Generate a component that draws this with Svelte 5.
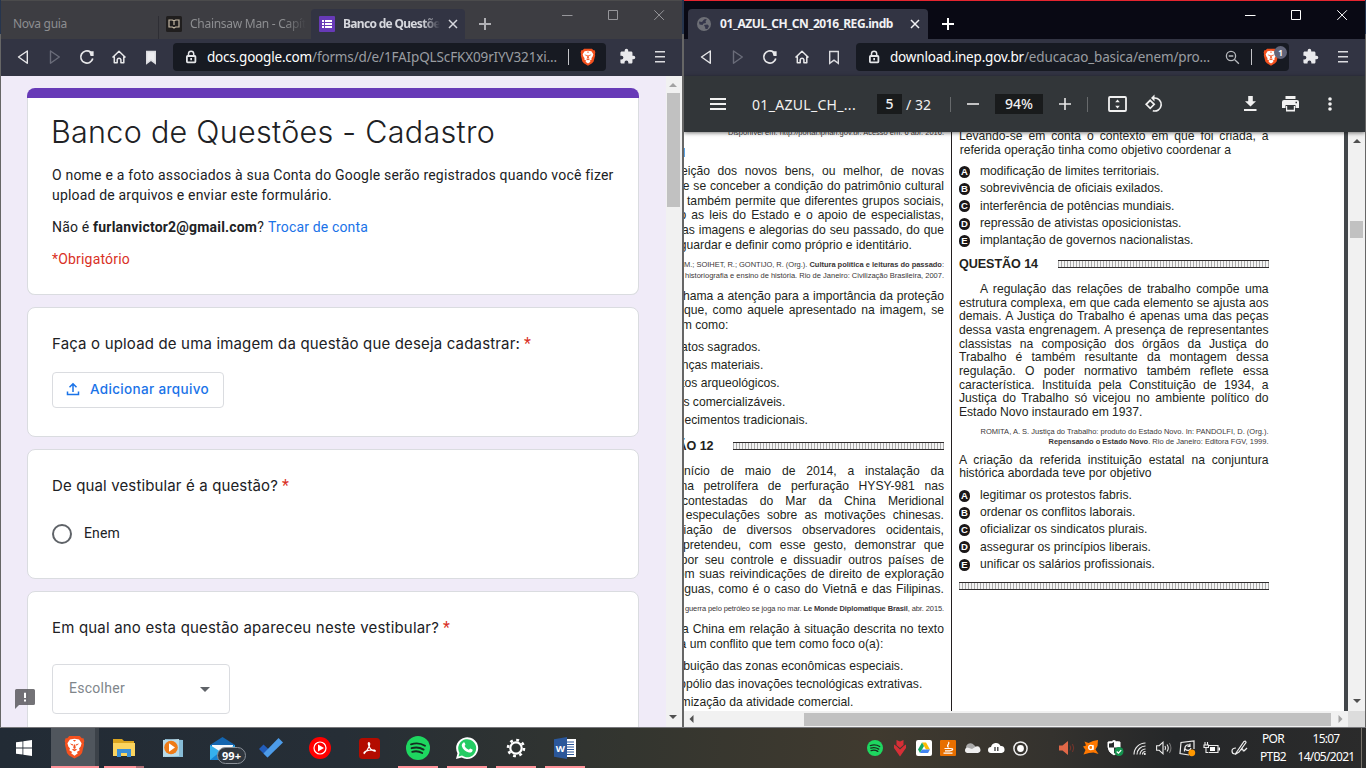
<script>
  // Spreads the letters of a single-line label over a given width.
  function fit(node, width) {
    const natural = node.getBoundingClientRect().width;
    const count = node.textContent.length;
    node.style.letterSpacing = (width - natural) / count + 'px';
  }

  // j: start offset of a justified line, e: right end of a ragged line
  const leftColumn = [
    { gap: -5, lh: 11, cls: 'src', lines: [{ e: 260, w: 216, t: 'Disponível em: http://portal.iphan.gov.br. Acesso em: 6 abr. 2016.' }] },
    { gap: 26.2, lh: 14.7, lines: [
      { j: -3, t: 'eição dos novos bens, ou melhor, de novas' },
      { j: -1.3, t: 'e se conceber a condição do patrimônio cultural' },
      { j: 3, t: 'também permite que diferentes grupos sociais,' },
      { j: -4.5, t: 'o as leis do Estado e o apoio de especialistas,' },
      { j: -2, t: 'as imagens e alegorias do seu passado, do que' },
      { e: 228, t: 'guardar e definir como próprio e identitário.' } ] },
    { gap: 6.9, lh: 11, cls: 'src', lines: [
      { e: 260, w: 260, t: 'M.; SOIHET, R.; GONTIJO, R. (Org.). ', b: 'Cultura política e leituras do passado', z: ':' },
      { e: 260, w: 259, t: 'historiografia e ensino de história. Rio de Janeiro: Civilização Brasileira, 2007.' } ] },
    { gap: 7.4, lh: 14.5, lines: [
      { j: -1, t: 'hama a atenção para a importância da proteção' },
      { j: 0, t: 'que, como aquele apresentado na imagem, se' },
      { e: 44.3, t: 'm como:' } ] },
    { gap: 5.8, lh: 18.3, lines: [
      { e: 76.7, t: 'atos sagrados.' }, { e: 79.3, t: 'nças materiais.' }, { e: 95.7, t: 'tos arqueológicos.' },
      { e: 101.3, t: 's comercializáveis.' }, { e: 124, t: 'ecimentos tradicionais.' } ] },
    { gap: 8.5, lh: 16, head: 'ÃO 12', end: 29.5, rule: 211 },
    { gap: 10.3, lh: 14.75, lines: [
      { j: 0, t: 'nício de maio de 2014, a instalação da' },
      { j: -3.5, t: 'na petrolífera de perfuração HYSY-981 nas' },
      { j: -2, t: 'contestadas do Mar da China Meridional' },
      { j: 1.7, t: 'especulações sobre as motivações chinesas.' },
      { j: -0.5, t: 'iação de diversos observadores ocidentais,' },
      { j: -1, t: 'pretendeu, com esse gesto, demonstrar que' },
      { j: -3.3, t: 'por seu controle e dissuadir outros países de' },
      { j: -6.2, t: 'om suas reivindicações de direito de exploração' },
      { j: 0.3, t: 'guas, como é o caso do Vietnã e das Filipinas.' } ] },
    { gap: 6.1, lh: 11, cls: 'src', lines: [{ e: 260, w: 259, t: 'guerra pelo petróleo se joga no mar. ', b: 'Le Monde Diplomatique Brasil', z: ', abr. 2015.' }] },
    { gap: 7.8, lh: 15, lines: [
      { j: -2, t: 'a China em relação à situação descrita no texto' },
      { e: 199.3, t: 'a um conflito que tem como foco o(a):' } ] },
    { gap: 5, lh: 18, lines: [
      { e: 219.3, t: 'ibuição das zonas econômicas especiais.' },
      { e: 238.3, t: 'opólio das inovações tecnológicas extrativas.' },
      { e: 169.3, t: 'mização da atividade comercial.' } ] }
  ];

  const rightColumn = [
    { gap: -1.6, lh: 13.7, lines: [
      { j: 0, t: 'Levando-se em conta o contexto em que foi criada, a' },
      { e: 272, t: 'referida operação tinha como objetivo coordenar a' } ] },
    { gap: 5.3, lh: 17.3, options: [
      ['modificação de limites territoriais.', 179.5], ['sobrevivência de oficiais exilados.', 183.5],
      ['interferência de potências mundiais.', 194.5], ['repressão de ativistas oposicionistas.', 201.5],
      ['implantação de governos nacionalistas.', 213.5] ] },
    { gap: 6.4, lh: 16, head: 'QUESTÃO 14', end: 79, rule: 211 },
    { gap: 10.9, lh: 13.7, lines: [
      { j: 21, t: 'A regulação das relações de trabalho compõe uma' },
      { j: 0, t: 'estrutura complexa, em que cada elemento se ajusta aos' },
      { j: 0, t: 'demais. A Justiça do Trabalho é apenas uma das peças' },
      { j: 0, t: 'dessa vasta engrenagem. A presença de representantes' },
      { j: 0, t: 'classistas na composição dos órgãos da Justiça do' },
      { j: 0, t: 'Trabalho é também resultante da montagem dessa' },
      { j: 0, t: 'regulação. O poder normativo também reflete essa' },
      { j: 0, t: 'característica. Instituída pela Constituição de 1934, a' },
      { j: 0, t: 'Justiça do Trabalho só vicejou no ambiente político do' },
      { e: 183.5, t: 'Estado Novo instaurado em 1937.' } ] },
    { gap: 7.3, lh: 10, cls: 'src', lines: [
      { e: 309.5, w: 288, t: 'ROMITA, A. S. Justiça do Trabalho: produto do Estado Novo. In: PANDOLFI, D. (Org.).' },
      { e: 309.5, w: 220, t: '', b: 'Repensando o Estado Novo', z: '. Rio de Janeiro: Editora FGV, 1999.' } ] },
    { gap: 6.6, lh: 13.8, lines: [
      { j: 0, t: 'A criação da referida instituição estatal na conjuntura' },
      { e: 192.5, t: 'histórica abordada teve por objetivo' } ] },
    { gap: 5.7, lh: 17.3, options: [
      ['legitimar os protestos fabris.', 152], ['ordenar os conflitos laborais.', 155.5],
      ['oficializar os sindicatos plurais.', 167.5], ['assegurar os princípios liberais.', 171],
      ['unificar os salários profissionais.', 175] ] }
  ];
</script>

{#snippet lion()}
  <path fill="#f4511e" d="M5 1h10l2 2 1.6 0 .8 3-.6 1.6.4 1.6-2 8-2 2.4L10 22.6 4.8 19.600l-2-2.4-2-8L1.200 7.600.6 6l.8-3L3 3z"/>
  <path fill="#fff" d="M5.600 4.200 10 3.600l4.400.6 2.400 3.800-.9 3-1.600 2 .7 1.500-2.800 1.700 1 1.300L10 19.800 6.800 17.500l1-1.300L5 14.500 5.700 13l-1.600-2-.9-3z"/>
  <path fill="#f4511e" d="M5.500 8.200l3.100.7-.5 1.500zM14.500 8.200l-3.100.7.5 1.500zM9.300 9h1.400l.5 3.500-1.200.9-1.200-.9zM7.300 14l2.100-.6.6.5.6-.5 2.100.6-2.700 1.600zM8.500 4.700h3L10 6.500z"/>
{/snippet}

{#snippet closeX(size)}
  <svg width={size} height={size} viewBox="0 0 10 10" fill="none" stroke="currentColor" stroke-width="1.5"><path d="M1 1l8 8M9 1l-8 8"/></svg>
{/snippet}

{#snippet plus()}
  <svg width="12" height="12" viewBox="0 0 12 12" fill="none" stroke="currentColor" stroke-width="2"><path d="M6 0v12M0 6h12"/></svg>
{/snippet}

{#snippet controls()}
  <div class="controls">
    <svg width="11" height="11" viewBox="0 0 11 11" fill="none" stroke="currentColor"><path d="M0 5.500h10.500"/></svg>
    <svg width="11" height="11" viewBox="0 0 11 11" fill="none" stroke="currentColor"><path d="M.5.5h9v9h-9z"/></svg>
    <svg width="11" height="11" viewBox="0 0 11 11" fill="none" stroke="currentColor"><path d="M.3.300l9.600 9.600M9.900.300L.3 9.900"/></svg>
  </div>
{/snippet}

{#snippet navbar(host, hostW, path, pathW, marked, pdf)}
  <div class="nav">
    <div class="navicons">
      <svg width="24" height="24" viewBox="0 0 24 24" fill="none" stroke="#e8e8ea" stroke-width="1.400" stroke-linejoin="round"><path d="M16.300 6v12.200L7.500 12z"/></svg>
      <svg width="24" height="24" viewBox="0 0 24 24" fill="none" stroke="#6a6c79" stroke-width="1.400" stroke-linejoin="round"><path d="M7.500 6v12.200L16.300 12z"/></svg>
      <svg width="24" height="24" viewBox="0 0 24 24" fill="none" stroke="#e8e8ea" stroke-width="1.700"><path d="M17.800 13.500A6.100 6.100 0 1 1 15.500 7"/><path fill="#e8e8ea" stroke="none" d="M14 6.300h4.600v4.800h-3z"/></svg>
      <svg width="24" height="24" viewBox="0 0 24 24" fill="none" stroke="#e8e8ea" stroke-width="1.500" stroke-linejoin="round"><path d="M5.500 12.500L12 6.300l6.500 6.200M7.300 11.500v6.300h2.900v-3.200a1.900 1.900 0 0 1 3.700 0v3.200h2.900v-6.300"/></svg>
      <svg width="24" height="24" viewBox="0 0 24 24" fill={marked ? '#ededf0' : 'none'} stroke="#dcdce0" stroke-width="1.400"><path d="M7.700 6.500h8.600v11.800L12 15.200l-4.300 3.100z"/></svg>
    </div>
    <div class="url">
      <svg class="lock" width="12" height="14" viewBox="0 0 12 14"><rect x="1.900" y="6" width="8.500" height="6.300" rx=".7" fill="none" stroke="#e4e5e8" stroke-width="1.800"/><path d="M3.500 6V3.800a2.600 2.600 0 0 1 5.200 0V6" fill="none" stroke="#e4e5e8" stroke-width="1.500"/><path fill="#e4e5e8" d="M5.300 8h1.700v2.200H5.300z"/></svg>
      <span class="host" use:fit={hostW}>{host}</span><span class="path" use:fit={pathW}>{path}</span>
      <span class="grow"></span>
      {#if pdf}
        <svg class="loupe" width="15" height="15" viewBox="0 0 15 15" fill="none" stroke="#b7b9bd" stroke-width="1.300"><circle cx="6" cy="6" r="4.600"/><path d="M9.500 9.500l4.400 4.200M3.700 6h4.600"/></svg>
      {/if}
      <i class="bar"></i>
      <span class="shield"><svg width="16" height="18" viewBox="0 0 20 23">{@render lion()}</svg>{#if pdf}<b class="count">1</b>{/if}</span>
    </div>
    <svg class="puzzle" width="17" height="17" viewBox="0 0 24 24" fill="#e9e9ec"><path d="M20.500 11H19V7c0-1.100-.9-2-2-2h-4V3.500a2.500 2.500 0 0 0-5 0V5H4c-1.100 0-2 .9-2 2v3.800h1.500a2.700 2.700 0 0 1 0 5.400H2V20c0 1.100.9 2 2 2h3.800v-1.500a2.700 2.700 0 0 1 5.400 0V22H17c1.100 0 2-.9 2-2v-4h1.500a2.500 2.500 0 0 0 0-5z"/></svg>
    <svg class="burger" width="10" height="12" viewBox="0 0 10 12" fill="#dcdce0"><path d="M0 0h10v1.600H0zM0 5h10v1.600H0zM0 10h10v1.600H0z"/></svg>
  </div>
{/snippet}

{#snippet column(blocks)}
  {#each blocks as b}
    <div class="block {b.cls ?? ''}" style="margin-top:{b.gap}px; line-height:{b.lh}px">
      {#if b.head}
        <div class="head"><div class="ragged" style="width:{b.end}px"><strong use:fit={b.end > 50 ? 79 : 36}>{b.head}</strong></div><i class="rule" style="width:{b.rule}px"></i></div>
      {:else if b.options}
        {#each b.options as [t, w], i}
          <div class="opt" style="height:{b.lh}px"><span class="bullet">{'ABCDE'[i]}</span><span use:fit={w}>{t}</span></div>
        {/each}
      {:else}
        {#each b.lines as l}
          {#if l.e !== undefined}
            <div class="ragged" style="width:{l.e}px; height:{b.lh}px">
              {#if l.w}<span use:fit={l.w}>{l.t}{#if l.b}<b>{l.b}</b>{/if}{l.z ?? ''}</span>{:else}<span>{l.t}</span>{/if}
            </div>
          {:else}
            <div class="just" style="margin-left:{l.j}px; height:{b.lh}px">{l.t}</div>
          {/if}
        {/each}
      {/if}
    </div>
  {/each}
{/snippet}

<div class="screen">
  <main>
    <section class="win left">
      <div class="tabs dim">
        <div class="tab first"><span use:fit={54}>Nova guia</span></div>
        <div class="tab second">
          <svg width="16" height="16" viewBox="0 0 16 16"><rect width="16" height="16" rx="1.500" fill="#201e1e"/><path d="M3 4h3.500L8 5l1.500-1H13v7H9.500L8 12l-1.500-1H3zM8 5v4" fill="none" stroke="#c5b8a4" stroke-width="1.200"/></svg>
          <span class="fade" use:fit={116}>Chainsaw Man - Capít</span>
        </div>
        <div class="tab active">
          <svg width="16" height="16" viewBox="0 0 16 16"><rect width="16" height="16" rx="1" fill="#673ab7"/><path fill="#fff" d="M3 4h2v2H3zM3 7h2v2H3zM3 10h2v2H3zM6 4h7v2H6zM6 7h7v2H6zM6 10h7v2H6z"/></svg>
          <strong class="fade" use:fit={97}>Banco de Questõe</strong>
          <em>{@render closeX(10)}</em>
        </div>
        <span class="new">{@render plus()}</span>
        {@render controls()}
      </div>
      {@render navbar('docs.google.com', 105, '/forms/d/e/1FAIpQLScFKX09rIYV321xi...', 245, true, false)}
      <div class="formview">
        <div class="form">
          <article class="intro">
            <h1><span use:fit={444}>Banco de Questões - Cadastro</span></h1>
            <p><span use:fit={561}>O nome e a foto associados à sua Conta do Google serão registrados quando você fizer</span><br><span use:fit={280}>upload de arquivos e enviar este formulário.</span></p>
            <p class="acct"><span use:fit={212}>Não é <b>furlanvictor2@gmail.com</b>?</span><a use:fit={100}>Trocar de conta</a></p>
            <p class="req"><span use:fit={78}>*Obrigatório</span></p>
          </article>
          <article class="q1">
            <h2><span use:fit={468}>Faça o upload de uma imagem da questão que deseja cadastrar:</span><sup>*</sup></h2>
            <button><svg width="14" height="14" viewBox="0 0 14 14" fill="none" stroke="#1a73e8" stroke-width="1.500"><path d="M7 10V2M3.500 5.200L7 1.700l3.500 3.500M1.500 9.500v3h11v-3"/></svg><span use:fit={119}>Adicionar arquivo</span></button>
          </article>
          <article class="q2">
            <h2><span use:fit={226}>De qual vestibular é a questão?</span><sup>*</sup></h2>
            <div class="radio"><i></i><span use:fit={36}>Enem</span></div>
          </article>
          <article class="q3">
            <h2><span use:fit={387}>Em qual ano esta questão apareceu neste vestibular?</span><sup>*</sup></h2>
            <div class="select"><span use:fit={56}>Escolher</span><svg width="10" height="5" viewBox="0 0 10 5"><path fill="#5f6368" d="M0 0h10L5 5z"/></svg></div>
          </article>
          <svg class="report" width="20" height="20" viewBox="0 0 20 20"><path fill="#5c5b5f" fill-opacity=".86" d="M1.500 0h17Q20 0 20 1.500v13Q20 16 18.500 16H4l-4 4V1.500Q0 0 1.500 0z"/><path fill="#fff" d="M9 3.800h2v5.200H9zM9 10.600h2v2H9z"/></svg>
        </div>
        <div class="vbar">
          <svg width="8" height="4" viewBox="0 0 8 4"><path fill="#a3a3a3" d="M0 4h8L4 0z"/></svg>
          <i></i>
          <svg class="dn" width="8" height="4" viewBox="0 0 8 4"><path fill="#505050" d="M0 0h8L4 4z"/></svg>
        </div>
      </div>
    </section>

    <section class="win right">
      <div class="tabs dark">
        <div class="tab active">
          <svg width="14" height="14" viewBox="0 0 14 14"><circle cx="7" cy="7" r="7" fill="#6d6f76"/><path fill="#34364a" d="M2 4.500l3 .5 1.500-2L8 2l2 .5-1.500 1.500L9 6l-2.500.5L5.500 8 2.500 7.500zM7 8l3.500-.5L12 9l-1.500 3H8.500L8 10z"/></svg>
          <strong use:fit={173}>01_AZUL_CH_CN_2016_REG.indb</strong>
          <em>{@render closeX(10)}</em>
        </div>
        <span class="new">{@render plus()}</span>
        {@render controls()}
      </div>
      {@render navbar('download.inep.gov.br', 134, '/educacao_basica/enem/pro...', 186, false, true)}
      <div class="pdfbar">
        <svg width="16" height="12" viewBox="0 0 16 12" fill="#f1f1f1"><path d="M0 0h16v2H0zM0 5h16v2H0zM0 10h16v2H0z"/></svg>
        <span class="doc" use:fit={104}>01_AZUL_CH_...</span>
        <span class="box pg">5</span>
        <span class="of" use:fit={25}>/ 32</span>
        <i class="vl"></i>
        <svg class="minus" width="12" height="12" viewBox="0 0 12 12"><path stroke="#e8e8e8" stroke-width="1.600" d="M0 6h12"/></svg>
        <span class="box zoom">94%</span>
        <svg class="pl" width="12" height="12" viewBox="0 0 12 12"><path stroke="#e8e8e8" stroke-width="1.600" d="M0 6h12M6 0v12"/></svg>
        <i class="vl v2"></i>
        <svg class="fitpage" width="20" height="16" viewBox="0 0 20 16"><rect x="1" y="1" width="17" height="14" rx="1" fill="none" stroke="#f1f1f1" stroke-width="1.800"/><path fill="#f1f1f1" d="M9.500 3.500L11.800 6.300H7.200zM9.500 12.500L11.800 9.700H7.200z"/></svg>
        <svg class="rot" width="20" height="18" viewBox="0 0 20 18" fill="none" stroke="#f1f1f1" stroke-width="1.700"><path d="M6.200 5.300l4 4-4 4-4-4z"/><path d="M9.500 3h.8a6.500 6.500 0 1 1-1.500 12.700"/><path fill="#f1f1f1" stroke="none" d="M10.500-.5v7L7 3z"/></svg>
        <svg class="down" width="14" height="16" viewBox="0 0 14 16" fill="#f1f1f1"><path d="M4.200 0h4.600v5.300H12L6.500 10.500 1 5.300h3.200zM0 13h12.500v2H0z"/></svg>
        <svg class="print" width="17" height="16" viewBox="0 0 17 16"><path fill="#f1f1f1" d="M3.500 0h10v3h-10zM2 4h13q2 0 2 2v6h-3.500V9h-10v3H0V6q0-2 2-2zM4 10h9v5.500H4z"/><path fill="#323639" d="M5.200 10h6.600v3.800H5.200zM13.500 5.800H15v1.400h-1.500z"/></svg>
        <svg class="dots" width="4" height="14" viewBox="0 0 4 14" fill="#f1f1f1"><circle cx="2" cy="2" r="1.800"/><circle cx="2" cy="7" r="1.800"/><circle cx="2" cy="12" r="1.800"/></svg>
      </div>
      <div class="pdfview">
        <div class="sheet">
          <div class="colA">{@render column(leftColumn)}<i class="hit"></i></div>
          <div class="colB">{@render column(rightColumn)}<i class="rule long"></i></div>
        </div>
        <div class="edge"></div>
        <div class="vbar">
          <svg width="8" height="4" viewBox="0 0 8 4"><path fill="#505050" d="M0 4h8L4 0z"/></svg>
          <i></i>
          <svg class="dn" width="8" height="4" viewBox="0 0 8 4"><path fill="#505050" d="M0 0h8L4 4z"/></svg>
        </div>
      </div>
      <div class="hbar">
        <svg width="5" height="8" viewBox="0 0 5 8"><path fill="#505050" d="M4.500 0v8L.5 4z"/></svg>
        <i></i>
        <svg width="5" height="8" viewBox="0 0 5 8"><path fill="#a3a3a3" d="M.5 0v8L4.500 4z"/></svg>
        <b></b>
      </div>
    </section>
  </main>

  <footer>
    <div class="apps">
      <span><svg width="16" height="16" viewBox="0 0 16 16" fill="#fff"><path d="M0 2.300l6.500-.9v6.200H0zM7.300 1.300L16 0v7.600H7.300zM0 8.400h6.500v6.200L0 13.700zM7.300 8.400H16V16l-8.700-1.300z"/></svg></span>
      <span class="cur"><svg width="21" height="24" viewBox="0 0 20 23">{@render lion()}</svg></span>
      <span class="run two"><svg width="22" height="20" viewBox="0 0 22 20"><path fill="#dba520" d="M0 1h9l2 2h10v4H0z"/><path fill="#fbd45f" d="M0 5h22v13H0z"/><path fill="#3a8fd8" d="M4 11h14v8h-4v-4H8v4H4z"/></svg></span>
      <span><svg width="20" height="20" viewBox="0 0 20 20"><path fill="#87bcd7" d="M2 1l18 1v17H2z"/><path fill="#b9dbe9" d="M0 2l16-1v17L0 19z"/><circle cx="8" cy="9.500" r="6.800" fill="#ee7b17"/><path fill="#fff" d="M6 5.300l6 4.200-6 4.200z"/></svg></span>
      <span class="mail"><svg width="25" height="23" viewBox="0 0 25 23"><path fill="#1365b0" d="M0 8L12.500 0 25 8v8H0z"/><path fill="#f5f8fb" d="M2 8h21v10H2z"/><path fill="#35b1ed" d="M0 8l12.500 8L25 8v15H0z"/><path fill="#1684d2" d="M0 23l11-9 3 2 10 7z"/></svg><b>99+</b></span>
      <span><svg width="24" height="20" viewBox="0 0 24 20"><path fill="#225dbb" d="M0 11l4.500-4.500L13 14.500 8.500 19.500z"/><path fill="#4d9ce9" d="M8.500 19.500L4.500 15.500 19.500 0 24 4.500z"/></svg></span>
      <span><svg width="22" height="22" viewBox="0 0 22 22"><circle cx="11" cy="11" r="11" fill="#f00"/><circle cx="11" cy="11" r="6" fill="none" stroke="#fff" stroke-width="1.200"/><path fill="#fff" d="M9 7.500l6 3.500-6 3.500z"/></svg></span>
      <span><svg width="21" height="21" viewBox="0 0 21 21"><rect width="21" height="21" rx="3.500" fill="#b30b00"/><path d="M9.800 4.500c2.200 0 .3 6.500-4.600 11-1.500-1.700 4.600-4 10.300-3.400 2.500 1.200-1 2-3.700-.9-1.800-2-3.300-6.600-2-6.700z" fill="none" stroke="#fff" stroke-width="1.200"/></svg></span>
      <span class="run"><svg width="24" height="24" viewBox="0 0 24 24"><circle cx="12" cy="12" r="12" fill="#1ed760"/><path d="M5 8.300c5-1.500 10-1 14 1.500M5.600 12.200c4-1.300 8.400-.8 12 1.400M6.200 15.800c3.700-1 7-.6 10 1.200" fill="none" stroke="#152c20" stroke-width="1.900" stroke-linecap="round"/></svg></span>
      <span class="run"><svg width="22" height="22" viewBox="0 0 22 22"><path fill="#fff" d="M0 22l1.500-5.700A11 10.800 0 1 1 5.700 20.500z"/><path fill="#24cc63" d="M2.500 19.600l1-3.700A9 9 0 1 1 6 18.600z"/><path fill="#fff" d="M7.500 5.500c.8-.5 1.200 0 1.900 2 0 .7-.8 1-.8 1.500 1 2 2.200 3 4.200 3.700.6 0 1-1.200 1.500-1.200l2.400 1.200c0 2.500-2.200 3.200-3.700 2.800-4-1-6.300-3.300-7.200-6.500-.2-1.500.5-2.800 1.700-3.500z"/></svg></span>
      <span class="run"><svg width="20" height="20" viewBox="0 0 20 20" fill="none" stroke="#fff"><circle cx="10" cy="10" r="5.700" stroke-width="2.200"/><circle cx="10" cy="10" r="8" stroke-width="2.600" stroke-dasharray="2.800 3.480"/></svg></span>
      <span class="run"><svg width="22" height="22" viewBox="0 0 22 22"><path fill="#fff" d="M11 2h11v18H11z"/><path stroke="#2b579a" stroke-width="1.100" d="M13 5h7M13 7.500h7M13 10h7M13 12.500h7M13 15h7M13 17.500h7"/><path fill="#2b579a" d="M0 2.200L13 0v22L0 19.800z"/><text x="1.800" y="14.500" font-family="Open Sans, sans-serif" font-size="9.500" font-weight="700" fill="#fff">W</text></svg></span>
    </div>
    <div class="tray">
      <span><svg width="16" height="16" viewBox="0 0 24 24"><circle cx="12" cy="12" r="12" fill="#1ed760"/><path d="M5 8.300c5-1.500 10-1 14 1.500M5.600 12.200c4-1.300 8.400-.8 12 1.400M6.200 15.800c3.700-1 7-.6 10 1.200" fill="none" stroke="#17301f" stroke-width="2" stroke-linecap="round"/></svg></span>
      <span><svg width="12" height="17" viewBox="0 0 12 17" fill="#d62f36"><path d="M2.500 0L6 1.500 9.500 0v5L6 8 2.500 5zM0 4.500l2 1.200L6 9.500l4-3.800 2-1.200v3.500L6 16.500 0 8z"/></svg></span>
      <span><svg width="16" height="16" viewBox="0 0 16 16"><rect width="16" height="16" rx="2" fill="#fff"/><path fill="#fbbc04" d="M6 2.500h4l4 7h-4z"/><path fill="#16a765" d="M6 2.500l2 3.500-4 7-2-3.500z"/><path fill="#4285f4" d="M6 9.500h8l-2 3.500H4z"/></svg></span>
      <span><svg width="16" height="16" viewBox="0 0 16 16"><rect width="16" height="16" rx="1" fill="#e76f00"/><path d="M8.500 2c2 2-3 3 0 5.500M4.500 8.500h7M5 10.800h5.500M3.500 13.200h9M11 8.500c2.500 0 2 2-.5 2" fill="none" stroke="#fff" stroke-width="1.200"/></svg></span>
      <span><svg width="17" height="12" viewBox="0 0 17 12"><path fill="#aaa" d="M2 5.500A4.500 4.500 0 0 1 10 3l5 5-12 2z"/><path fill="#eee" d="M3 11a2.800 2.800 0 0 1 .5-5.500L8 7l4-2.500A3.300 3.300 0 0 1 14 11z"/></svg></span>
      <span><svg width="17" height="12" viewBox="0 0 17 12"><path fill="#fff" d="M3 11a3 3 0 0 1 0-6A5 5 0 0 1 12.500 4 3.500 3.500 0 0 1 13.500 11z"/><path stroke="#333" stroke-width="1.300" d="M7 5v4M9.800 5v4"/></svg></span>
      <span><svg width="15" height="15" viewBox="0 0 15 15"><circle cx="7.500" cy="7.500" r="6.600" fill="none" stroke="#eee" stroke-width="1.500"/><circle cx="7.500" cy="7.500" r="3.400" fill="#fff"/></svg></span>
      <span class="sp"></span>
      <span><svg width="16" height="14" viewBox="0 0 16 14"><path fill="#e06848" d="M0 4.500h3.500L9 0v14L3.500 9.500H0z"/><path d="M11 4.500q1.500 2.500 0 5M13.500 3q2.500 4 0 8" fill="none" stroke="#79342a"/></svg></span>
      <span><svg width="16" height="16" viewBox="0 0 16 16"><path fill="#ff7800" d="M1.500 1.500l4 1.500L10 1l5-1-.5 6-2 3.500L15.500 14l-5-1.500L6 13l-5.500 1.500 2-4.500L0 6.500l3-1z"/><circle cx="7.800" cy="7.500" r="2.100" fill="none" stroke="#fff" stroke-width="1.300"/><path stroke="#fff" stroke-width="1.300" d="M10 5v5"/></svg></span>
      <span><svg width="17" height="16" viewBox="0 0 17 16"><path fill="#fff" stroke="#fff" d="M1 2q4 0 6-1.500Q9 2 13 2v5q0 5-6 8-6-3-6-8z"/><path fill="#292c2d" d="M2 3.500q3 0 5-1.500v5.500H2zM7 7.500h5q0 4-5 6z"/><circle cx="12" cy="11.500" r="4.500" fill="#14934e"/><path d="M9.700 11.500l1.700 1.600 2.800-3" fill="none" stroke="#fff" stroke-width="1.300"/></svg></span>
      <span><svg width="13" height="13" viewBox="0 0 13 13" fill="none" stroke="#eee" stroke-width="1.100"><path d="M1 12.500A11.500 11.500 0 0 1 12.500 1M4 12.500A8.500 8.500 0 0 1 12.500 4M7 12.500A5.500 5.500 0 0 1 12.500 7M9.500 12.500a3 3 0 0 1 3-3"/><circle cx="11.800" cy="12" r="1" fill="#fff" stroke="none"/></svg></span>
      <span><svg width="16" height="14" viewBox="0 0 16 14" fill="none" stroke="#eee" stroke-width="1.100"><path d="M.6 4.700h2.600L7 1.200v11.600L3.200 9.300H.6z"/><path d="M9 5q1.200 2 0 4M11 3.500q2.500 3.500 0 7"/><path stroke="#777" d="M13.300 2q3.300 5 0 10"/></svg></span>
      <span><svg width="17" height="17" viewBox="0 0 17 17" fill="none" stroke="#eee" stroke-width="1.200"><path d="M10 15l-9-1.500 1-11L15 1v8M6 9c-.5-4 3-5 5-3M11 3.500v3H8.500M12 8c-1 3-4 3-6 1M5.500 11.500v-3"/><circle cx="12.800" cy="12.800" r="3.400" fill="#ff9800" stroke="none"/></svg></span>
      <span><svg width="17" height="12" viewBox="0 0 17 12"><path d="M5 3.500h10v7H5.500M2 0v3M4.500 0v3M1 3h4.500v2.500H1zM3 5.500v5h2" fill="none" stroke="#eee" stroke-width="1.100"/><path fill="#fff" d="M7 5h5v4H7zM15.500 5.500H17v3h-1.500z"/></svg></span>
      <span class="pen"><svg width="17" height="17" viewBox="0 0 17 17" fill="none" stroke="#eee" stroke-width="1.200"><path d="M5 13L13 1.500q2-1 2 1L8 12l-4 2.500zM5 8q-4 0-4 3t3 3M10 10q2-2 2 0t2 0l2-2"/></svg></span>
      <span class="lang"><i use:fit={22}>POR</i><i use:fit={26}>PTB2</i></span>
      <span class="clock"><i use:fit={27}>15:07</i><i use:fit={57}>14/05/2021</i></span>
      <i class="peek"></i>
    </div>
  </footer>
</div>

<style>
  :global(body) { margin: 0; overflow: hidden; }
  .screen { width: 1366px; height: 768px; overflow: hidden; background: #68686a; font-family: "Noto Sans", "Open Sans", sans-serif; display: flex; flex-direction: column; }
  .screen * { box-sizing: border-box; }
  svg { display: block; flex: none; overflow: visible; }
  i, em { font-style: normal; }
  main { display: flex; height: 727px; padding-left: 1px; gap: 2px; flex: none; background: linear-gradient(#26354e 0 34px, #666 34px); }
  .win { width: 681px; height: 727px; flex: none; display: flex; flex-direction: column; overflow: hidden; }

  .tabs { height: 39px; flex: none; display: flex; align-items: flex-end; font-size: 12px; white-space: nowrap; }
  .dim { background: #3d3d42; border-top: 1px solid #4b4b4c; color: #8d8e91; }
  .dark { background: #090914; border-top: 1px solid #e5252f; color: #fff; padding-left: 4px; }
  .tab { height: 30px; display: flex; align-items: center; gap: 8px; overflow: hidden; flex: none; padding-bottom: 1px; }
  .first { width: 157px; padding-left: 12px; }
  .second { width: 153px; padding-left: 7px; border-left: 1px solid #2e2e34; height: 23px; padding-bottom: 8px; }
  .active { width: 154px; background: #323443; border-radius: 4px 4px 0 0; padding-left: 8px; color: #d6d7dd; }
  .active em { margin-left: auto; margin-right: 8px; }
  .fade { display: inline-block; -webkit-mask: linear-gradient(90deg, #000 82%, transparent); mask: linear-gradient(90deg, #000 82%, transparent); }
  .dark .active { width: 240px; padding-left: 9px; gap: 9px; color: #f1f1f3; }
  .new { height: 30px; display: flex; align-items: center; margin-left: 14px; padding-bottom: 1px; color: #b0b0b4; }
  .dark .new { color: #fff; }
  .controls { margin-left: auto; align-self: flex-start; display: flex; gap: 35px; padding: 9px 17px 0 0; color: #96969a; }
  .dark .controls { color: #fff; }

  .nav { height: 37px; flex: none; background: #323443; display: flex; align-items: center; }
  .navicons { display: flex; gap: 8px; width: 162px; margin-left: 10px; margin-bottom: 2px; }
  .url { width: 433px; height: 28px; margin-bottom: 1px; border-radius: 4px; background: #171a22; display: flex; align-items: center; padding-left: 12px; font-size: 13.500px; white-space: nowrap; }
  .lock { margin-right: 10px; }
  .host { color: #fff; }
  .path { color: #9a9da1; }
  .grow { flex: 1; }
  .loupe { margin-right: 11px; }
  .bar { width: 1px; height: 16px; background: #c4c5c9; margin-right: 11px; }
  .shield { width: 26px; position: relative; }
  .count { position: absolute; left: 11px; top: -2px; width: 13px; height: 13px; border-radius: 7px; background: #626579; color: #fff; font-size: 8px; line-height: 13px; text-align: center; }
  .puzzle { margin-left: 13px; margin-bottom: 2px; }
  .burger { margin-left: 19px; margin-bottom: 2px; }

  .formview { height: 651px; display: flex; background: #f0ebf8; }
  .form { width: 665px; height: 651px; overflow: hidden; position: relative; padding: 12px 0 0 26px; display: flex; flex-direction: column; gap: 12px; font-family: Roboto, sans-serif; color: #202124; white-space: nowrap; }
  article { width: 612px; background: #fff; border: 1px solid #dadce0; border-radius: 8px; padding: 0 24px; flex: none; }
  .intro { height: 207px; border: 0; border-top: 10px solid #673ab7; box-shadow: inset 0 -1px #dadce0, inset 1px 0 #dadce0, inset -1px 0 #dadce0; padding: 12px 25px 0; }
  .q1, .q2 { height: 130px; }
  .q3 { height: 160px; }
  h1 { margin: 0; font: 300 30.500px/43px Inter, sans-serif; margin-left: -1px; }
  p { margin: 12px 0 0; font-size: 14px; line-height: 20px; }
  a { color: #1a73e8; margin-left: 4px; display: inline-block; }
  .req { color: #d93025; }
  h2 { margin: 0; padding-top: 24px; font: 400 15px/24px Inter, sans-serif; }
  h2 span, p span, h1 span { display: inline-block; }
  sup { color: #d93025; font: 400 16px/10px Roboto, sans-serif; vertical-align: baseline; margin-left: 4px; }
  button { margin: 16px 0 0; width: 172px; height: 36px; border: 1px solid #dadce0; border-radius: 4px; background: #fff; padding: 0 0 2px 13px; display: flex; align-items: center; gap: 10px; font: 500 13.500px Inter, sans-serif; color: #1a73e8; }
  .radio { display: flex; align-items: center; gap: 12px; margin-top: 26px; font-size: 14px; height: 20px; line-height: 18px; }
  .radio span { padding-bottom: 2px; }
  .radio i { width: 20px; height: 20px; border: 2px solid #5f6368; border-radius: 50%; }
  .select { margin-top: 24px; width: 178px; height: 50px; border: 1px solid #dadce0; border-radius: 4px; display: flex; align-items: center; justify-content: space-between; padding: 0 19px 0 16px; color: #80868b; font-size: 14px; }
  .select span { padding-bottom: 2px; }
  .report { position: absolute; left: 14px; top: 613px; }
  .vbar { width: 16px; background: #f1f1f1; display: flex; flex-direction: column; align-items: center; padding: 7px 0 8px; }
  .vbar i { width: 13px; height: 114px; background: #c1c1c1; margin-top: 6px; }
  .formview .vbar { padding-right: 2px; }
  .dn { margin-top: auto; }

  .pdfbar { height: 56px; flex: none; background: #323639; display: flex; align-items: center; padding-left: 26px; color: #f1f1f1; font-size: 14px; white-space: nowrap; position: relative; z-index: 1; box-shadow: 0 1px 4px #0008; }
  .doc { margin-left: 26px; }
  .box { background: #191b1c; height: 20px; line-height: 20px; text-align: center; font-weight: 500; }
  .pg { width: 25px; margin-left: 21px; }
  .of { margin-left: 4px; }
  .vl { width: 1px; height: 15px; background: #676a6c; margin-left: 19px; }
  .minus { margin-left: 16px; }
  .zoom { width: 48px; margin-left: 16px; }
  .pl { margin-left: 16px; }
  .v2 { margin-left: 16px; }
  .fitpage { margin-left: 20px; }
  .rot { margin-left: 16px; }
  .down { margin-left: 80px; }
  .print { margin-left: 24px; }
  .dots { margin-left: 29px; }
  .pdfview { height: 579px; flex: none; display: flex; overflow: hidden; background: #fff; }
  .sheet { width: 660px; flex: none; display: flex; overflow: hidden; font-family: "Liberation Sans", Arial, sans-serif; font-size: 12.150px; color: #231f20; white-space: nowrap; }
  .colA { width: 268px; padding-right: 7px; border-right: 1px solid #231f20; flex: none; overflow: hidden; position: relative; display: flow-root; }
  .hit { position: absolute; left: 0; top: 16px; width: 1px; height: 9px; background: #5aa5e8; }
  .colB { width: 317px; padding: 0 0 0 7px; display: flow-root; flex: none; }
  .just { text-align: justify; text-align-last: justify; }
  .ragged { display: flex; justify-content: flex-end; white-space: pre; }
  .ragged span { flex: none; }
  .src { font-size: 7.500px; color: #3a3637; }
  .colB .block { width: 309.5px; }
  .opt { display: flex; align-items: center; }
  .bullet { width: 11px; height: 12px; border-radius: 6px; background: #1a1718; color: #fff; font-size: 9.500px; line-height: 12px; font-weight: 700; text-align: center; margin-right: 10px; }
  .head { display: flex; align-items: center; justify-content: space-between; font-size: 12.600px; }
  .rule { display: block; height: 8px; border: 1px solid #2e2b2c; border-width: 1px 0; background: repeating-linear-gradient(90deg, #aaa 0 1px, #f4f4f4 1px 3px); }
  .long { width: 310px; margin-top: 8.3px; }
  .edge { width: 4px; background: #42464a; }
  .pdfview .vbar { width: 17px; }
  .pdfview .vbar i { height: 17px; margin-top: 78px; }
  .hbar { height: 16px; flex: none; background: #f1f1f1; display: flex; align-items: center; padding-left: 5px; }
  .hbar i { width: 527px; height: 13px; background: #c1c1c1; margin: 0 7px 0 110px; }
  .hbar b { width: 17px; height: 16px; background: #dcdcdc; margin-left: auto; }

  footer { height: 41px; border-top: 1px solid #77777a; display: flex; justify-content: space-between; background: linear-gradient(90deg, #222b35 0, #262e36 25%, #33352f 46%, #403a2f 64%, #34322e 77%, #252729 86%, #2b2b2b 100%); color: #fff; }
  .apps { display: flex; }
  .apps > span { width: 40px; height: 40px; margin-right: 9px; display: flex; align-items: center; justify-content: center; position: relative; }
  .apps > span:first-child { margin: 0 7px 0 4px; }
  .apps > .cur { width: 48px; margin-right: 5px; padding-right: 1px; background: linear-gradient(90deg, #50565d 0 44px, #3c4249 44px); border-bottom: 2px solid #ff9299; }
  .run { border-bottom: 2px solid #ff9299; padding-top: 2px; }
  .two { border-image: linear-gradient(90deg, #ff9299 31px, #ad6c73 31px) 1; border-top: 0; border-left: 0; border-right: 0; }
  .mail b { position: absolute; left: 15px; top: 19px; height: 17px; width: 29px; border: 1px solid #8a9098; border-radius: 9px; background: #30373f; font-size: 11px; line-height: 15px; text-align: center; font-family: "Open Sans", sans-serif; }
  .tray { display: flex; align-items: center; }
  .tray > span { width: 24.200px; display: flex; justify-content: center; }
  .tray .sp { width: 22px; }
  .tray .pen { width: 31px; }
  .tray .lang { width: 36px; }
  .tray .clock { width: 70px; }
  .tray .lang, .tray .clock { flex-direction: column; align-items: center; font: 12px/18px "Noto Sans", sans-serif; }
  .peek { width: 5px; height: 40px; border-left: 1px solid #77726b; }
</style>
